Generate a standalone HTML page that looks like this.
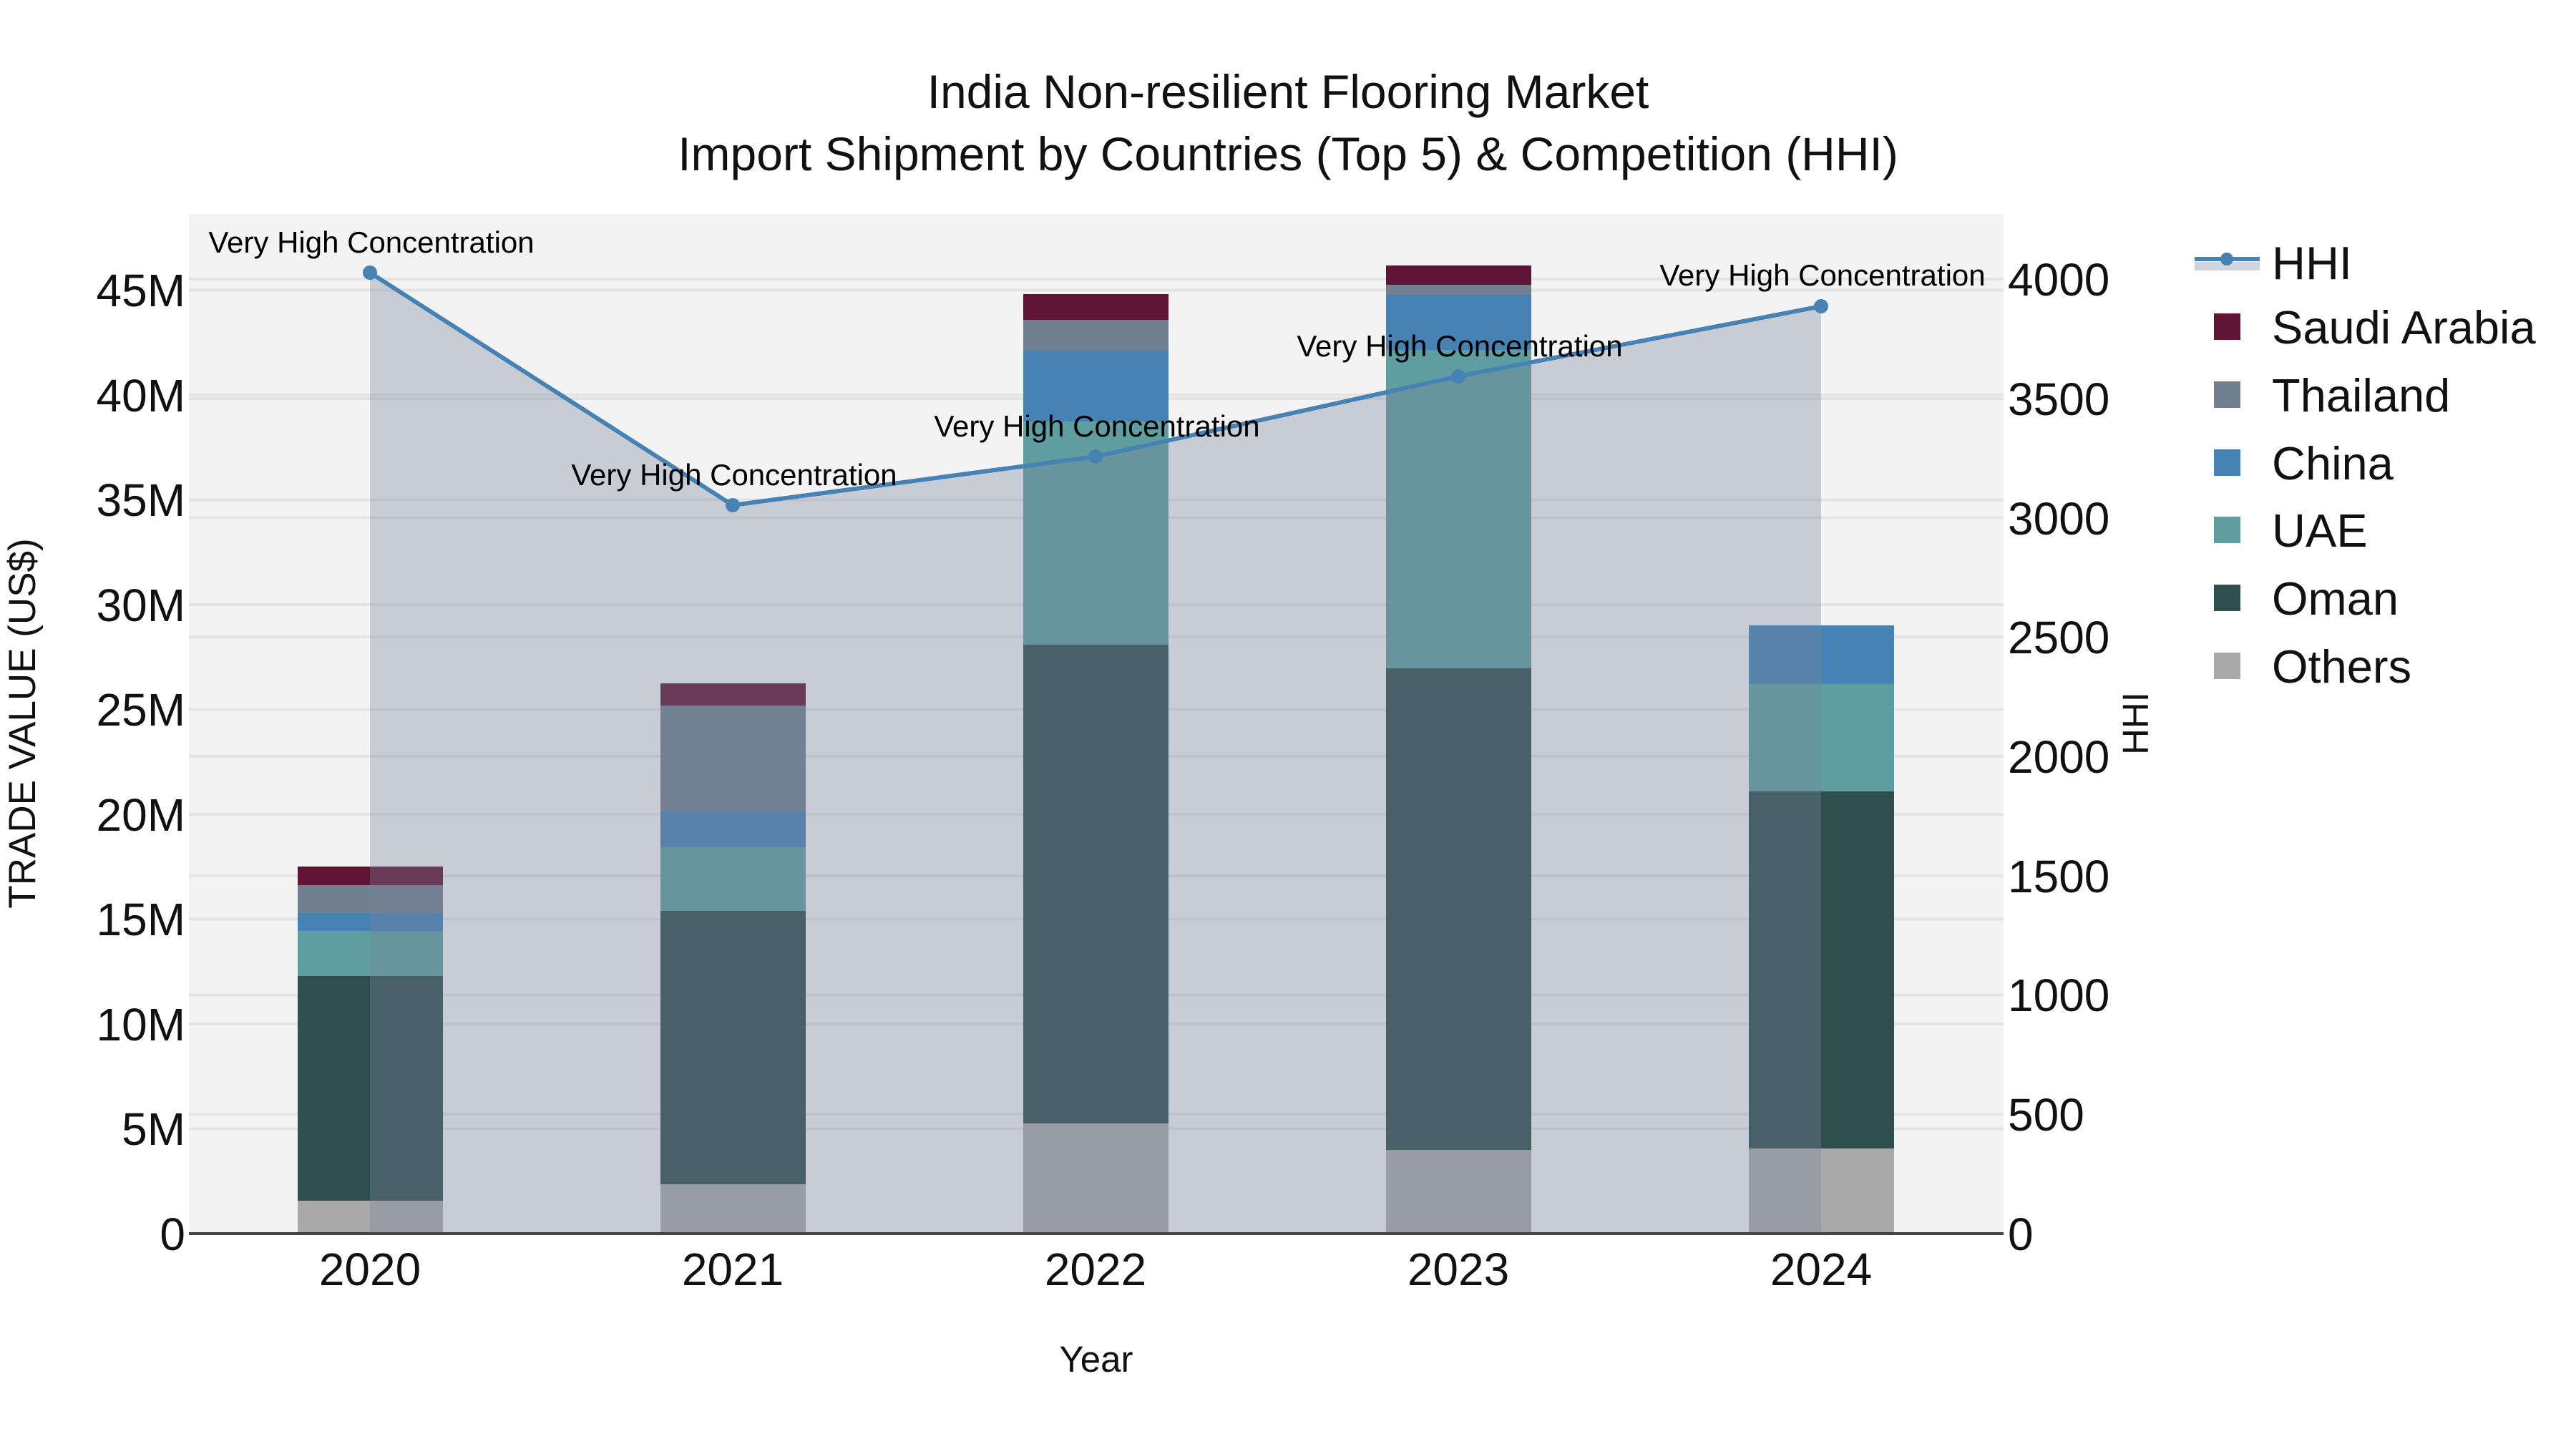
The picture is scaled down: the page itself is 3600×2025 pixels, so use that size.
<!DOCTYPE html>
<html><head><meta charset="utf-8"><style>html,body{margin:0;padding:0;background:#fff}svg{display:block}</style></head>
<body>
<svg width="3600" height="2025" viewBox="0 0 3600 2025" xmlns="http://www.w3.org/2000/svg" font-family="'Liberation Sans', sans-serif">
<rect width="3600" height="2025" fill="#fff"/>
<rect x="264" y="299" width="2536" height="1425" fill="#f3f3f3"/>
<g stroke="#e4e4e4" stroke-width="4">
<line x1="264" x2="2800" y1="1577.5" y2="1577.5"/><line x1="264" x2="2800" y1="1431" y2="1431"/><line x1="264" x2="2800" y1="1284.5" y2="1284.5"/><line x1="264" x2="2800" y1="1138" y2="1138"/><line x1="264" x2="2800" y1="991.5" y2="991.5"/><line x1="264" x2="2800" y1="845" y2="845"/><line x1="264" x2="2800" y1="698.5" y2="698.5"/><line x1="264" x2="2800" y1="552" y2="552"/><line x1="264" x2="2800" y1="405.5" y2="405.5"/>
<line x1="264" x2="2800" y1="1557" y2="1557"/><line x1="264" x2="2800" y1="1390.5" y2="1390.5"/><line x1="264" x2="2800" y1="1223.8" y2="1223.8"/><line x1="264" x2="2800" y1="1057" y2="1057"/><line x1="264" x2="2800" y1="890" y2="890"/><line x1="264" x2="2800" y1="723.5" y2="723.5"/><line x1="264" x2="2800" y1="557" y2="557"/><line x1="264" x2="2800" y1="390" y2="390"/>
</g>
<g>
<rect x="416" y="1678" width="203" height="46" fill="#a9a9a9"/><rect x="416" y="1364" width="203" height="314" fill="#2f4f4f"/><rect x="416" y="1301" width="203" height="63" fill="#5f9ea0"/><rect x="416" y="1276" width="203" height="25" fill="#4682b4"/><rect x="416" y="1237" width="203" height="39" fill="#708090"/><rect x="416" y="1211" width="203" height="26" fill="#611535"/>
<rect x="923" y="1655" width="203" height="69" fill="#a9a9a9"/><rect x="923" y="1273" width="203" height="382" fill="#2f4f4f"/><rect x="923" y="1184" width="203" height="89" fill="#5f9ea0"/><rect x="923" y="1133" width="203" height="51" fill="#4682b4"/><rect x="923" y="986" width="203" height="147" fill="#708090"/><rect x="923" y="955" width="203" height="31" fill="#611535"/>
<rect x="1430" y="1570" width="203" height="154" fill="#a9a9a9"/><rect x="1430" y="901" width="203" height="669" fill="#2f4f4f"/><rect x="1430" y="589" width="203" height="312" fill="#5f9ea0"/><rect x="1430" y="489" width="203" height="100" fill="#4682b4"/><rect x="1430" y="447" width="203" height="42" fill="#708090"/><rect x="1430" y="411" width="203" height="36" fill="#611535"/>
<rect x="1937" y="1607" width="203" height="117" fill="#a9a9a9"/><rect x="1937" y="934" width="203" height="673" fill="#2f4f4f"/><rect x="1937" y="489" width="203" height="445" fill="#5f9ea0"/><rect x="1937" y="412" width="203" height="77" fill="#4682b4"/><rect x="1937" y="398" width="203" height="14" fill="#708090"/><rect x="1937" y="371" width="203" height="27" fill="#611535"/>
<rect x="2444" y="1605" width="203" height="119" fill="#a9a9a9"/><rect x="2444" y="1106" width="203" height="499" fill="#2f4f4f"/><rect x="2444" y="956" width="203" height="150" fill="#5f9ea0"/><rect x="2444" y="874" width="203" height="82" fill="#4682b4"/>
</g>
<polygon points="517,1724 517,381 1024,706 1531,638 2038,526 2545,428 2545,1724" fill="rgb(119,131,155)" fill-opacity="0.35"/>
<line x1="264" x2="2800" y1="1724" y2="1724" stroke="#444" stroke-width="4"/>
<polyline points="517,381 1024,706 1531,638 2038,526 2545,428" fill="none" stroke="#4682b4" stroke-width="6"/>
<g fill="#4682b4"><circle cx="517" cy="381" r="10"/><circle cx="1024" cy="706" r="10"/><circle cx="1531" cy="638" r="10"/><circle cx="2038" cy="526" r="10"/><circle cx="2545" cy="428" r="10"/></g>
<g font-size="42" text-anchor="middle" fill="#000">
<text x="519" y="353">Very High Concentration</text>
<text x="1026" y="678">Very High Concentration</text>
<text x="1533" y="610">Very High Concentration</text>
<text x="2040" y="498">Very High Concentration</text>
<text x="2547" y="399">Very High Concentration</text>
</g>
<g font-size="66" fill="#111" text-anchor="middle">
<text x="1800" y="151">India Non-resilient Flooring Market</text>
<text x="1800" y="238">Import Shipment by Countries (Top 5) &amp; Competition (HHI)</text>
</g>
<g font-size="64" fill="#111" text-anchor="end">
<text x="259" y="1747">0</text><text x="259" y="1600">5M</text><text x="259" y="1454">10M</text><text x="259" y="1307">15M</text><text x="259" y="1161">20M</text><text x="259" y="1014">25M</text><text x="259" y="868">30M</text><text x="259" y="721">35M</text><text x="259" y="575">40M</text><text x="259" y="428">45M</text>
</g>
<g font-size="64" fill="#111">
<text x="2806" y="1747">0</text><text x="2806" y="1580">500</text><text x="2806" y="1413">1000</text><text x="2806" y="1247">1500</text><text x="2806" y="1080">2000</text><text x="2806" y="913">2500</text><text x="2806" y="747">3000</text><text x="2806" y="580">3500</text><text x="2806" y="413">4000</text>
</g>
<g font-size="64" fill="#111" text-anchor="middle">
<text x="517" y="1796">2020</text><text x="1024" y="1796">2021</text><text x="1531" y="1796">2022</text><text x="2038" y="1796">2023</text><text x="2545" y="1796">2024</text>
</g>
<g font-size="51" fill="#111" text-anchor="middle">
<text x="1532" y="1917">Year</text>
<text transform="translate(49,1011) rotate(-90)" font-size="53">TRADE VALUE (US$)</text>
<text transform="translate(3002,1011) rotate(-90)">HHI</text>
</g>
<rect x="3067" y="366" width="91" height="12" fill="rgb(119,131,155)" fill-opacity="0.35"/>
<line x1="3067" x2="3158" y1="362" y2="362" stroke="#4682b4" stroke-width="6"/>
<circle cx="3112" cy="362" r="9" fill="#4682b4"/>
<rect x="3094" y="438" width="37" height="37" fill="#611535"/>
<rect x="3094" y="533" width="37" height="37" fill="#708090"/>
<rect x="3094" y="628" width="37" height="37" fill="#4682b4"/>
<rect x="3094" y="722" width="37" height="37" fill="#5f9ea0"/>
<rect x="3094" y="817" width="37" height="37" fill="#2f4f4f"/>
<rect x="3094" y="912" width="37" height="37" fill="#a9a9a9"/>
<g font-size="65" fill="#111">
<text x="3175" y="390">HHI</text>
<text x="3175" y="480">Saudi Arabia</text>
<text x="3175" y="575">Thailand</text>
<text x="3175" y="670">China</text>
<text x="3175" y="764">UAE</text>
<text x="3175" y="859">Oman</text>
<text x="3175" y="954">Others</text>
</g>
</svg>
</body></html>
